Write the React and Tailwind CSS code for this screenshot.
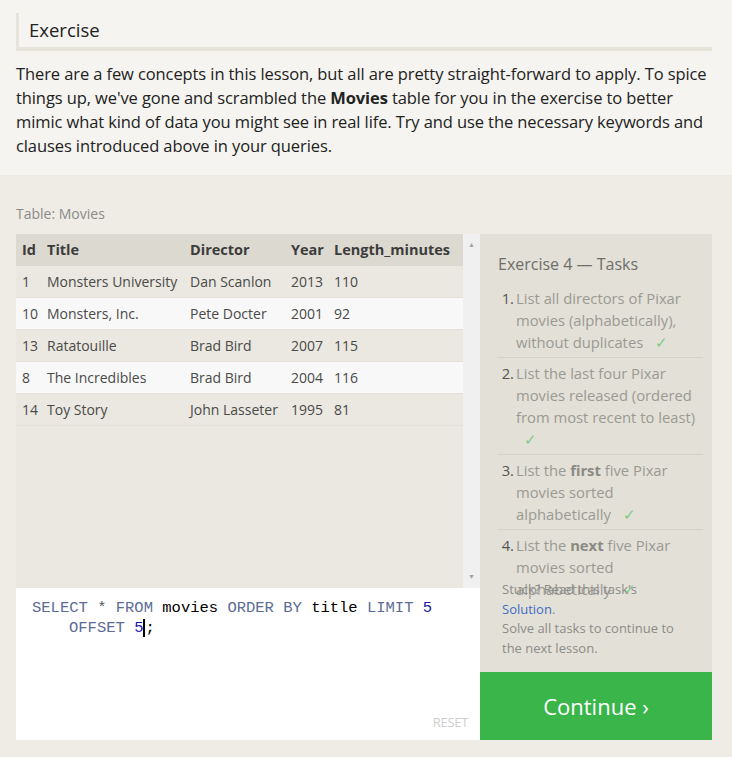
import React from 'react';

const rows = [
  { id: 1, title: 'Monsters University', director: 'Dan Scanlon', year: 2013, len: 110 },
  { id: 10, title: 'Monsters, Inc.', director: 'Pete Docter', year: 2001, len: 92 },
  { id: 13, title: 'Ratatouille', director: 'Brad Bird', year: 2007, len: 115 },
  { id: 8, title: 'The Incredibles', director: 'Brad Bird', year: 2004, len: 116 },
  { id: 14, title: 'Toy Story', director: 'John Lasseter', year: 1995, len: 81 },
];

const Check = () => <span className="ml-2 text-[#7fc98a]">✓</span>;

const Task = ({ n, children, last }) => (
  <li className={`flex ${last ? '' : 'border-b border-[#d4d1c6]'} pb-[4px] mb-[4px]`}>
    <span className="w-[18px] shrink-0 text-right pr-[2px] text-[#555]">{n}.</span>
    <div className="text-[#9a9a94]">{children}</div>
  </li>
);

export default function App() {
  return (
    <div className="w-[732px] h-[757px] overflow-hidden bg-[#eeece5] font-['Open_Sans',sans-serif]">
      {/* Intro */}
      <div className="bg-[#f5f4f0] px-4 pt-[13px] pb-[17px]">
        <div className="w-[696px] border-l-[3px] border-b-[4px] border-[#e6e4da] h-[38px] flex items-center pl-[10px]">
          <h2 className="text-[18.5px] text-[#222]">Exercise</h2>
        </div>
        <p className="mt-[11px] text-[16.5px] leading-[24px] text-[#222] tracking-[-0.1px]">
          There are a few concepts in this lesson, but all are pretty straight-forward to apply. To spice<br />
          things up, we've gone and scrambled the <b>Movies</b> table for you in the exercise to better<br />
          mimic what kind of data you might see in real life. Try and use the necessary keywords and<br />
          clauses introduced above in your queries.
        </p>
      </div>

      {/* Workspace */}
      <div className="px-4 pt-[30px]">
        <div className="text-[14px] text-[#8a8a86] h-[18px] leading-[18px]">Table: Movies</div>
        <div className="mt-[11px] grid grid-cols-[464px_232px]">
          {/* left column */}
          <div className="flex flex-col">
            <div className="h-[354px] flex bg-[#eae8e1]">
              <div className="w-[447px] text-[14px]">
                <div className="flex h-[32px] items-center bg-[#dcdad0] font-bold text-[#3c3c3c] text-[14.5px]">
                  <span className="w-[31px] pl-[6px]">Id</span>
                  <span className="w-[143px]">Title</span>
                  <span className="w-[101px]">Director</span>
                  <span className="w-[43px]">Year</span>
                  <span>Length_minutes</span>
                </div>
                {rows.map((r, i) => (
                  <div
                    key={r.id}
                    className={`flex h-[32px] items-center text-[#4a4a48] ${i % 2 ? 'bg-[#f8f8f8]' : 'bg-[#eae8e1]'} border-b border-[#e2e0d8]`}
                  >
                    <span className="w-[31px] pl-[6px]">{r.id}</span>
                    <span className="w-[143px]">{r.title}</span>
                    <span className="w-[101px]">{r.director}</span>
                    <span className="w-[43px]">{r.year}</span>
                    <span>{r.len}</span>
                  </div>
                ))}
              </div>
              <div className="w-[17px] bg-[#f0f0f0] flex flex-col justify-between items-center py-[6px] text-[7px] text-[#a3a3a3]">
                <span>▲</span>
                <span>▼</span>
              </div>
            </div>
            <div className="h-[152px] bg-white pl-[16px] pt-[10px] pr-[12px] pb-[8px] flex flex-col font-['Liberation_Mono',monospace] text-[15.5px] leading-[20px]">
              <div>
                <span className="text-[#5b6b95]">SELECT</span> <span className="text-[#555]">*</span>{' '}
                <span className="text-[#5b6b95]">FROM</span> <span className="text-black">movies</span>{' '}
                <span className="text-[#5b6b95]">ORDER BY</span> <span className="text-black">title</span>{' '}
                <span className="text-[#5b6b95]">LIMIT</span> <span className="text-[#1a1aa6]">5</span>
              </div>
              <div className="pl-[37px]">
                <span className="text-[#5b6b95]">OFFSET</span> <span className="text-[#1a1aa6]">5</span>
                <span className="border-l-[2px] border-black">;</span>
              </div>
              <div className="mt-auto text-right font-['Open_Sans',sans-serif] text-[13px] text-[#cfcfcf] tracking-[-0.3px]">
                RESET
              </div>
            </div>
          </div>

          {/* right column */}
          <div className="flex flex-col">
            <div className="relative h-[438px] bg-[#e3e0d7] pl-[18px] pr-[9px] pt-[19px] text-[14.8px] leading-[22px]">
              <h3 className="text-[16px] text-[#6e6e6a] mb-[12px]">Exercise 4 — Tasks</h3>
              <ol className="pl-[0px]">
                <Task n={1}>
                  List all directors of Pixar movies (alphabetically), without duplicates <Check />
                </Task>
                <Task n={2}>
                  List the last four Pixar movies released (ordered from most recent to least) <Check />
                </Task>
                <Task n={3}>
                  List the <b className="text-[#8a8a84]">first</b> five Pixar movies sorted alphabetically <Check />
                </Task>
                <Task n={4} last>
                  List the <b className="text-[#8a8a84]">next</b> five Pixar movies sorted alphabetically <Check />
                </Task>
              </ol>
              <div className="absolute left-[22px] top-[346px] right-[18px] text-[13px] leading-[19.5px] text-[#8c8c88]">
                Stuck? Read this task's
                <br />
                <span className="text-[#3d6dc6]">Solution</span>.
                <br />
                Solve all tasks to continue to
                <br />
                the next lesson.
              </div>
            </div>
            <button className="h-[68px] bg-[#3ab54a] text-white text-[22px] flex items-center justify-center">
              Continue ›
            </button>
          </div>
        </div>
      </div>
    </div>
  );
}
